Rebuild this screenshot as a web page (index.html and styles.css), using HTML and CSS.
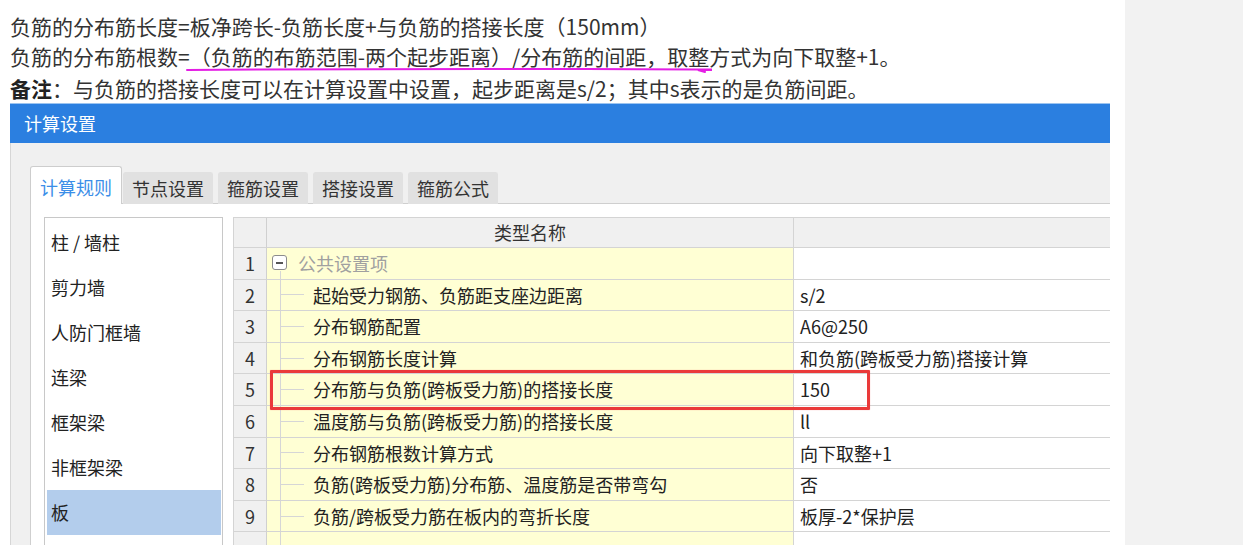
FILE: index.html
```html
<!DOCTYPE html>
<html lang="zh-CN">
<head>
    <meta charset="UTF-8">
    <title>计算设置 - 负筋分布筋</title>
    <link rel="stylesheet" href="styles.css">
</head>
<body>
    <div class="page">
        <div class="main">
            <!-- 说明文字 -->
            <div class="notes">
                <p>负筋的分布筋长度=板净跨长-负筋长度+与负筋的搭接长度（150mm）</p>
                <p>负筋的分布筋根数=（负筋的布筋范围-两个起步距离）/分布筋的间距，取整方式为向下取整+1。</p>
                <p class="remark"><b>备注</b>：与负筋的搭接长度可以在计算设置中设置，起步距离是s/2；其中s表示的是负筋间距。</p>
                <svg class="scribble" width="526" height="8" viewBox="0 0 526 8">
                    <path d="M1 4 Q 200 2.5 400 3 T 512 4 L 519 6" fill="none" stroke="#e41ee4" stroke-width="2" stroke-linecap="round"/>
                </svg>
            </div>

            <!-- 计算设置窗口 -->
            <div class="dialog">
                <div class="dialog-title">计算设置</div>
                <div class="dialog-body">
                    <div class="tabs">
                        <div class="tab active">计算规则</div>
                        <div class="tab">节点设置</div>
                        <div class="tab">箍筋设置</div>
                        <div class="tab">搭接设置</div>
                        <div class="tab">箍筋公式</div>
                    </div>
                    <div class="pane">
                        <ul class="nav-list">
                            <li>柱 / 墙柱</li>
                            <li>剪力墙</li>
                            <li>人防门框墙</li>
                            <li>连梁</li>
                            <li>框架梁</li>
                            <li>非框架梁</li>
                            <li class="selected">板</li>
                        </ul>
                        <div class="grid">
                            <div class="row head">
                                <div class="num"></div>
                                <div class="name">类型名称</div>
                                <div class="value"></div>
                            </div>
                            <div class="row">
                                <div class="num">1</div>
                                <div class="name group"><span class="toggle"></span>公共设置项</div>
                                <div class="value"></div>
                            </div>
                            <div class="row">
                                <div class="num">2</div>
                                <div class="name">起始受力钢筋、负筋距支座边距离</div>
                                <div class="value">s/2</div>
                            </div>
                            <div class="row">
                                <div class="num">3</div>
                                <div class="name">分布钢筋配置</div>
                                <div class="value">A6@250</div>
                            </div>
                            <div class="row">
                                <div class="num">4</div>
                                <div class="name">分布钢筋长度计算</div>
                                <div class="value">和负筋(跨板受力筋)搭接计算</div>
                            </div>
                            <div class="row">
                                <div class="num">5</div>
                                <div class="name">分布筋与负筋(跨板受力筋)的搭接长度</div>
                                <div class="value">150</div>
                            </div>
                            <div class="row">
                                <div class="num">6</div>
                                <div class="name">温度筋与负筋(跨板受力筋)的搭接长度</div>
                                <div class="value">ll</div>
                            </div>
                            <div class="row">
                                <div class="num">7</div>
                                <div class="name">分布钢筋根数计算方式</div>
                                <div class="value">向下取整+1</div>
                            </div>
                            <div class="row">
                                <div class="num">8</div>
                                <div class="name">负筋(跨板受力筋)分布筋、温度筋是否带弯勾</div>
                                <div class="value">否</div>
                            </div>
                            <div class="row">
                                <div class="num">9</div>
                                <div class="name">负筋/跨板受力筋在板内的弯折长度</div>
                                <div class="value">板厚-2*保护层</div>
                            </div>
                            <div class="row">
                                <div class="num"></div>
                                <div class="name"></div>
                                <div class="value"></div>
                            </div>
                            <!-- 红框标注 -->
                            <div class="mark"></div>
                        </div>
                    </div>
                </div>
            </div>
        </div>
        <div class="side"></div>
    </div>
</body>
</html>
```

FILE: styles.css
```css
:root {
    --blue: #2b7fe0;
    --line: #d4d4d4;
    --yellow: #ffffd4;
    --panel: #f0f0f0;
    --text: #222;
}

* {
    box-sizing: border-box;
}

body {
    margin: 0;
    font-family: "Noto Sans CJK SC", "Microsoft YaHei", sans-serif;
    color: var(--text);
    background: #fff;
}

.page {
    display: flex;
    height: 545px;
    overflow: hidden;
}

.main {
    width: 1125px;
    padding-left: 10px;
}

.side {
    flex: 1;
    background: #f2f2f2;
}

/* notes */
.notes {
    position: relative;
    padding-top: 11px;
    font-size: 21px;
    color: #333;
}

.notes p {
    margin: 0;
    line-height: 30px;
    white-space: nowrap;
}

.notes .remark {
    margin-top: 2px;
}

.notes .remark b {
    font-weight: 700;
    color: #222;
}

.scribble {
    position: absolute;
    left: 176px;
    top: 66px;
}

/* dialog */
.dialog {
    width: 1100px;
    height: 442px;
    overflow: hidden;
}

.dialog-title {
    height: 40px;
    padding-left: 14px;
    background: var(--blue);
    border-top: 1px solid #9cc4f0;
    color: #fff;
    font-size: 18px;
    line-height: 39px;
}

.dialog-body {
    height: 402px;
    background: var(--panel);
    border-left: 1px solid #d6d6d6;
    padding: 23px 0 0 19px;
}

.tabs {
    display: flex;
    align-items: flex-end;
    height: 38px;
    position: relative;
    z-index: 1;
}

.tab {
    height: 32px;
    padding: 0 8px;
    margin-right: 5px;
    background: #e1e1e1;
    border: 1px solid #e1e1e1;
    border-bottom: none;
    border-radius: 3px 3px 0 0;
    font-size: 18px;
    line-height: 30px;
    color: #333;
    white-space: nowrap;
}

.tab.active {
    height: 38px;
    padding: 0 9px;
    margin-right: 1px;
    background: #fff;
    border-color: #cdcdcd;
    color: #3b8ee8;
    line-height: 40px;
}

.pane {
    display: flex;
    gap: 10px;
    height: 400px;
    margin-top: -1px;
    padding: 13px 0 0 13px;
    background: #fff;
    border-top: 1px solid #cfcfcf;
    border-left: 1px solid #cfcfcf;
}

/* left list */
.nav-list {
    list-style: none;
    margin: 0;
    padding: 2px 1px 0 2px;
    width: 179px;
    flex-shrink: 0;
    border: 1px solid #c8c8c8;
}

.nav-list li {
    height: 45px;
    padding-left: 4px;
    font-size: 18px;
    line-height: 45px;
    color: #222;
}

.nav-list li.selected {
    background: #b3cdec;
}

/* grid */
.grid {
    position: relative;
    flex: 1;
    border-top: 1px solid var(--line);
    border-left: 1px solid var(--line);
}

.row {
    display: grid;
    grid-template-columns: 33px 527px 1fr;
    height: 31.6px;
    font-size: 18px;
    line-height: 30px;
}

.row.head {
    height: 30px;
    line-height: 28px;
}

.row > div {
    border-bottom: 1px solid var(--line);
    white-space: nowrap;
}

.num {
    background: var(--panel);
    border-right: 1px solid #d0d0d0;
    text-align: center;
    color: #333;
}

.name {
    padding-left: 46px;
    background:
        linear-gradient(#d6d6d6, #d6d6d6) 13px 0 / 1px 100% no-repeat,
        linear-gradient(#d6d6d6, #d6d6d6) 13px 50% / 24px 1px no-repeat,
        var(--yellow);
    border-right: 1px solid var(--line);
}

.value {
    padding-left: 6px;
    background: #fff;
}

.head > div {
    background: var(--panel);
    color: #333;
}

.head .name {
    padding-left: 0;
    text-align: center;
}

.name.group {
    display: flex;
    align-items: center;
    padding-left: 5px;
    color: #a0a0a0;
    background:
        linear-gradient(#d6d6d6, #d6d6d6) 13px 23px / 1px 100% no-repeat,
        var(--yellow);
}

.toggle {
    display: flex;
    align-items: center;
    justify-content: center;
    width: 15px;
    height: 15px;
    margin: -1px 11px 0 0;
    border: 1px solid #8c8c8c;
    border-radius: 3px;
    background: #fff;
}

.toggle::before {
    content: "";
    width: 7px;
    height: 1.5px;
    background: #555;
}

.mark {
    position: absolute;
    left: 36px;
    top: 152px;
    width: 600px;
    height: 40px;
    border: 3px solid #ea3a3a;
    border-radius: 1px;
    box-shadow: 0 0 1px rgba(234, 58, 58, 0.6);
}
```
